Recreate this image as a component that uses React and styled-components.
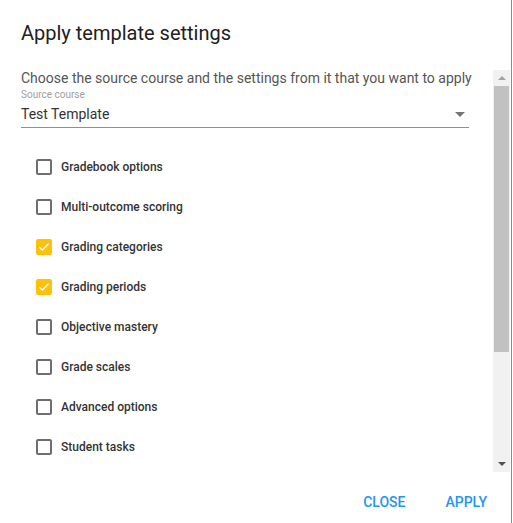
import React from "react";
import styled, { createGlobalStyle } from "styled-components";

const Global = createGlobalStyle`
  html, body { margin: 0; padding: 0; background: #fff; }
  body { font-family: Roboto, "Liberation Sans", sans-serif; }
`;

const Dialog = styled.div`
  width: 512px;
  height: 523px;
  box-sizing: border-box;
  border-right: 1px solid #8a8a8a;
  background: #fff;
  display: flex;
  flex-direction: column;
`;

const Title = styled.h2`
  margin: 0;
  padding: 17px 21px 0;
  font-size: 20px;
  font-weight: 400;
  line-height: 32px;
  color: #212121;
`;

const Body = styled.div`
  margin-top: 21px;
  height: 402px;
  display: flex;
  overflow: hidden;
`;

const Content = styled.div`
  flex: 1;
  padding: 0 24px 0 21px;
  overflow: hidden;
`;

const Description = styled.p`
  margin: 0;
  font-size: 14px;
  line-height: 16px;
  color: #555;
  white-space: nowrap;
`;

const FieldLabel = styled.div`
  margin-top: 3px;
  font-size: 10px;
  line-height: 12px;
  color: #9e9e9e;
`;

const Select = styled.div`
  height: 26px;
  display: flex;
  align-items: center;
  justify-content: space-between;
  border-bottom: 1px solid #8f8f8f;
  font-size: 14px;
  color: #333;
  padding-right: 4px;
`;

const Caret = styled.span`
  width: 0;
  height: 0;
  border-left: 5px solid transparent;
  border-right: 5px solid transparent;
  border-top: 5px solid #757575;
`;

const List = styled.ul`
  list-style: none;
  margin: 19px 0 0;
  padding: 0 0 0 15px;
`;

const Row = styled.li`
  height: 40px;
  display: flex;
  align-items: center;
  gap: 9px;
  font-size: 12px;
  font-weight: 500;
  color: #333;
`;

const Box = styled.span`
  width: 16px;
  height: 16px;
  box-sizing: border-box;
  border-radius: 2px;
  border: ${(p) => (p.$checked ? "none" : "2px solid #6e6e6e")};
  background: ${(p) => (p.$checked ? "#ffc107" : "#fff")};
  display: flex;
  align-items: center;
  justify-content: center;
  flex: none;
`;

const ScrollBar = styled.div`
  width: 17px;
  margin-right: 1px;
  background: #f1f1f1;
  display: flex;
  flex-direction: column;
`;

const ArrowBtn = styled.div`
  height: 16px;
  display: flex;
  align-items: center;
  justify-content: center;
`;

const Tri = styled.span`
  width: 0;
  height: 0;
  border-left: 4px solid transparent;
  border-right: 4px solid transparent;
  ${(p) =>
    p.$up
      ? `border-bottom: 4px solid ${p.$color};`
      : `border-top: 4px solid ${p.$color};`}
`;

const Track = styled.div`
  flex: 1;
  padding: 0 1px 0 1px;
  display: flex;
  flex-direction: column;
`;

const Thumb = styled.div`
  height: 266px;
  background: #c1c1c1;
`;

const Footer = styled.div`
  flex: 1;
  display: flex;
  justify-content: flex-end;
  align-items: center;
  gap: 8px;
  padding: 8px 8px 0;
`;

const Button = styled.button`
  height: 36px;
  min-width: 64px;
  padding: 0 16px;
  border: none;
  background: transparent;
  font-family: Roboto, "Liberation Sans", sans-serif;
  font-size: 14px;
  font-weight: 500;
  color: #2196f3;
  text-transform: uppercase;
  cursor: pointer;
`;

const Check = () => (
  <svg width="12" height="10" viewBox="0 0 12 10">
    <path d="M1.5 5.2 L4.5 8 L10.5 1.8" fill="none" stroke="#fff" strokeWidth="1.4" />
  </svg>
);

const items = [
  ["Gradebook options", false],
  ["Multi-outcome scoring", false],
  ["Grading categories", true],
  ["Grading periods", true],
  ["Objective mastery", false],
  ["Grade scales", false],
  ["Advanced options", false],
  ["Student tasks", false],
];

export default function App() {
  return (
    <>
      <Global />
      <Dialog>
        <Title>Apply template settings</Title>
        <Body>
          <Content>
            <Description>
              Choose the source course and the settings from it that you want to apply
            </Description>
            <FieldLabel>Source course</FieldLabel>
            <Select>
              <span>Test Template</span>
              <Caret />
            </Select>
            <List>
              {items.map(([label, checked]) => (
                <Row key={label}>
                  <Box $checked={checked}>{checked && <Check />}</Box>
                  {label}
                </Row>
              ))}
            </List>
          </Content>
          <ScrollBar>
            <ArrowBtn>
              <Tri $up $color="#a3a3a3" />
            </ArrowBtn>
            <Track>
              <Thumb />
            </Track>
            <ArrowBtn>
              <Tri $color="#505050" />
            </ArrowBtn>
          </ScrollBar>
        </Body>
        <Footer>
          <Button>Close</Button>
          <Button>Apply</Button>
        </Footer>
      </Dialog>
    </>
  );
}
